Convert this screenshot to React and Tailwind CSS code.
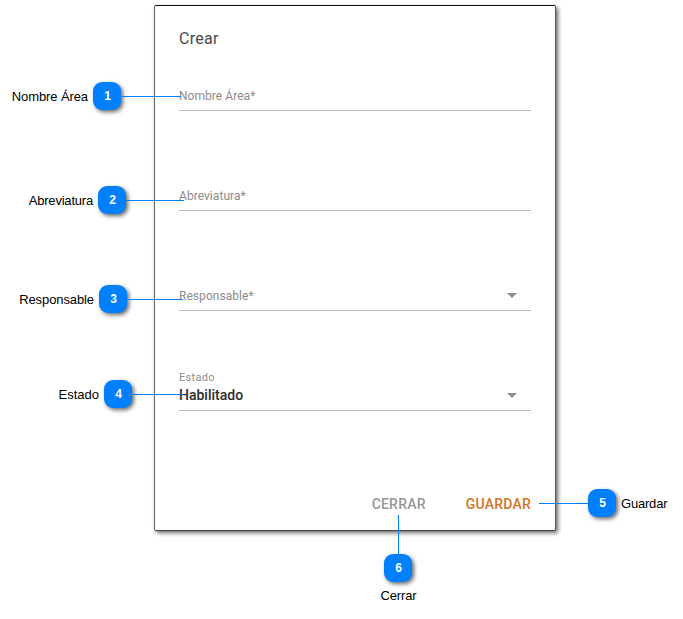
function Badge({ n }) {
  return (
    <span className="flex size-7 shrink-0 items-center justify-center rounded-[9px] bg-[#0080ff] pl-px font-['Liberation_Sans',sans-serif] text-[12px] font-bold leading-none text-white shadow-[2px_2px_4px_rgba(0,0,0,0.6)]">
      {n}
    </span>
  );
}

function LeftCallout({ n, label, place, line, tracking }) {
  return (
    <div className={`absolute left-0 flex h-7 items-center ${place}`}>
      <span className={`flex-1 whitespace-nowrap pr-[5px] pt-[2px] text-right ${tracking}`}>{label}</span>
      <Badge n={n} />
      <span className={`mt-px h-px bg-[#0080ff] ${line}`} />
    </div>
  );
}

function Arrow() {
  return (
    <svg className="mr-[13px] h-[5px] w-[11px]" viewBox="0 0 11 5">
      <path d="M0 0h10L5 5z" fill="#8c8c8c" />
    </svg>
  );
}

function Field({ label, value, select }) {
  return (
    <div className="mb-[63px] flex h-[37px] items-end border-b border-[#bdbdbd]">
      <div className="flex flex-1 flex-col">
        {value ? (
          <>
            <span className="text-[11px] leading-[14px] tracking-[0.3px] text-[#8c8c8c]">{label}</span>
            <span className="pb-[6px] pt-px text-[14px] font-medium leading-[18px] text-[#2b2b2b]">{value}</span>
          </>
        ) : (
          <span className="pb-[6px] text-[12px] leading-[16px] tracking-[0.05px] text-[#8c8c8c]">{label}</span>
        )}
      </div>
      {select && <div className="pb-[12px]"><Arrow /></div>}
    </div>
  );
}

export default function App() {
  return (
    <div className="relative h-[619px] w-[683px] overflow-hidden bg-white pl-[154px] pt-[5px] font-['Liberation_Sans',Arial,sans-serif] text-[13px] leading-4 text-black">
      <main className="flex h-[526px] w-[402px] flex-col rounded-[2px] border border-b-[#444] border-l-[#666] border-r-[#555] border-t-[#111] bg-white px-6 font-[Roboto,sans-serif] shadow-[2px_2px_4px_rgba(0,0,0,0.6)]">
        <h1 className="mt-[23px] h-5 text-[16px] leading-5 tracking-[0.25px] text-[#484848]">Crear</h1>
        <form className="mt-[25px]">
          <Field label="Nombre Área*" />
          <Field label="Abreviatura*" />
          <Field label="Responsable*" select />
          <Field label="Estado" value="Habilitado" select />
        </form>
        <div className="mt-5 flex justify-end gap-10 text-[14px] font-medium leading-5 tracking-[0.22px]">
          <button type="button" className="text-[#969696]">CERRAR</button>
          <button type="button" className="text-[#d47424]">GUARDAR</button>
        </div>
      </main>

      <LeftCallout n="1" label="Nombre Área" place="top-[82px] w-[181px]" line="w-[60px]" tracking="tracking-[-0.1px]" />
      <LeftCallout n="2" label="Abreviatura" place="top-[186px] w-[184px]" line="w-[58px]" tracking="tracking-[-0.2px]" />
      <LeftCallout n="3" label="Responsable" place="top-[285px] w-[183px]" line="w-[56px]" tracking="tracking-[-0.1px]" />
      <LeftCallout n="4" label="Estado" place="top-[380px] w-[183px]" line="w-[51px]" tracking="tracking-normal" />
      <div className="absolute left-[539px] top-[489px] flex h-7 items-center">
        <span className="mt-px h-px w-[49px] bg-[#0080ff]" />
        <Badge n="5" />
        <span className="pl-[5px] pt-[2px] tracking-[-0.2px]">Guardar</span>
      </div>
      <div className="absolute left-[368px] top-[515px] flex w-[60px] flex-col items-center">
        <span className="ml-px h-[39px] w-px bg-[#0080ff]" />
        <Badge n="6" />
        <span className="ml-px mt-[6px] tracking-[-0.15px]">Cerrar</span>
      </div>
    </div>
  );
}
